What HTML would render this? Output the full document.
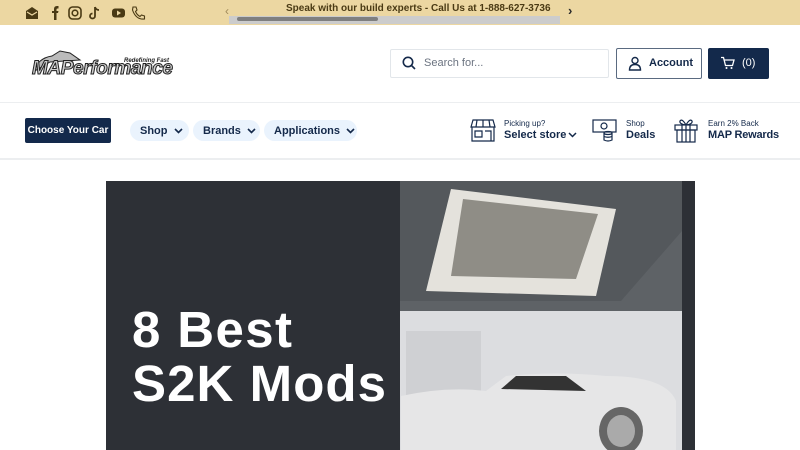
<!DOCTYPE html>
<html><head><meta charset="utf-8"><style>
*{margin:0;padding:0;box-sizing:border-box}
body{width:800px;height:450px;overflow:hidden;background:#fff;font-family:"Liberation Sans",Arial,sans-serif;position:relative;color:#14294a}
.abs{position:absolute;white-space:nowrap}
.top{left:0;top:0;width:800px;height:25px;background:#ecd7a2}
.pill{background:#eaf3fd;border-radius:11px;height:21px;top:120px;font-size:11px;font-weight:bold;color:#14294a;display:flex;align-items:center;padding-left:10px}
.pill svg{margin-left:6px}
</style></head><body>
<div class="abs top"></div>
<svg class="abs" style="left:24px;top:4px" width="125" height="18" viewBox="0 0 125 18" fill="#4a3a14">
<path d="M2 7 L8 3 L14 7 V15 H2Z"/><path d="M3 8 L8 11 L13 8" stroke="#ecd7a2" stroke-width="1.2" fill="none"/>
<path d="M30 16 V9 H28 V7 H30 V5 Q30 2 33 2 H34.5 V4.5 H33.5 Q32.5 4.5 32.5 5.5 V7 H34.5 L34 9 H32.5 V16Z"/>
<rect x="45" y="3" width="12" height="12" rx="3.5" fill="none" stroke="#4a3a14" stroke-width="1.6"/><circle cx="51" cy="9" r="2.8" fill="none" stroke="#4a3a14" stroke-width="1.6"/>
<path d="M71 3 V12 A2.5 2.5 0 1 1 68.5 9.5 M71 3 Q72 6 75 6" fill="none" stroke="#4a3a14" stroke-width="1.8"/>
<rect x="88" y="4.5" width="13" height="9" rx="3"/><path d="M93 6.5 L97 9 L93 11.5Z" fill="#ecd7a2"/>
<path d="M109 3 L112 3 L113 6 L111.5 7.5 Q113 11 116 12.5 L117.5 11 L120.5 12 L120.5 15 Q112 16 108.5 6 Z" fill="none" stroke="#4a3a14" stroke-width="1.1"/>
</svg>
<div class="abs" style="left:225px;top:4px;font-size:12px;color:#a08a5a">‹</div>
<div class="abs" style="left:229px;top:16px;width:331px;height:8px;background:#cccccc"></div>
<div class="abs" style="left:237px;top:17px;width:141px;height:4px;background:#7f7f7f;border-radius:2px"></div>
<div class="abs" style="left:286px;top:3px;font-size:10px;font-weight:bold;color:#4a3a14">Speak with our build experts - Call Us at 1-888-627-3736</div>
<div class="abs" style="left:568px;top:3px;font-size:13px;font-weight:bold;color:#2a2a2a">›</div>

<svg class="abs" style="left:30px;top:48px" width="146" height="30" viewBox="0 0 146 30">
<path d="M3 24 Q8 10 22 8 L30 3 L40 5 L50 12 L20 14 Z" fill="#bbb" stroke="#222" stroke-width="1"/>
<text x="2" y="26" font-family="Liberation Sans" font-weight="bold" font-style="italic" font-size="19" fill="#ccc" stroke="#222" stroke-width="1" letter-spacing="-1" textLength="140">MAPerformance</text>
<text x="94" y="14" font-family="Liberation Sans" font-weight="bold" font-style="italic" font-size="6" fill="#222">Redefining Fast</text>
</svg>

<div class="abs" style="left:390px;top:49px;width:219px;height:29px;border:1px solid #e2e6ea;border-radius:2px"></div>
<svg class="abs" style="left:402px;top:56px" width="14" height="14" viewBox="0 0 14 14"><circle cx="6" cy="6" r="4.7" fill="none" stroke="#14294a" stroke-width="1.6"/><path d="M9.5 9.5 L13 13" stroke="#14294a" stroke-width="1.6"/></svg>
<div class="abs" style="left:424px;top:57px;font-size:11px;color:#6b7380">Search for...</div>
<div class="abs" style="left:616px;top:48px;width:86px;height:31px;border:1px solid #5a6a80;border-radius:2px"></div>
<svg class="abs" style="left:628px;top:56px" width="14" height="15" viewBox="0 0 14 15"><circle cx="7" cy="4.5" r="3" fill="none" stroke="#14294a" stroke-width="1.4"/><path d="M1.5 14 Q1.5 8.5 7 8.5 Q12.5 8.5 12.5 14 Z" fill="none" stroke="#14294a" stroke-width="1.4"/></svg>
<div class="abs" style="left:649px;top:57px;font-size:11px;font-weight:bold">Account</div>
<div class="abs" style="left:708px;top:48px;width:61px;height:31px;background:#13294b;border-radius:2px"></div>
<svg class="abs" style="left:720px;top:56px" width="15" height="14" viewBox="0 0 15 14"><path d="M1 1.5 H3.5 L5.5 9.5 H12.5 L14 4 H4.5" fill="none" stroke="#fff" stroke-width="1.3"/><circle cx="6.5" cy="12" r="1" fill="#fff"/><circle cx="11.5" cy="12" r="1" fill="#fff"/></svg>
<div class="abs" style="left:742px;top:57px;font-size:11px;color:#fff">(0)</div>

<div class="abs" style="left:0;top:102px;width:800px;height:1px;background:#eceef0"></div>
<div class="abs" style="left:0;top:158px;width:800px;height:2px;background:#eceef0"></div>

<div class="abs" style="left:25px;top:118px;width:86px;height:25px;background:#13294b;border-radius:2px;color:#fff;font-size:10px;font-weight:bold;text-align:center;line-height:25px">Choose Your Car</div>
<div class="abs pill" style="left:130px;width:59px">Shop<svg width="9" height="6" viewBox="0 0 9 6"><path d="M1 1 L4.5 4.5 L8 1" fill="none" stroke="#14294a" stroke-width="1.6"/></svg></div>
<div class="abs pill" style="left:193px;width:67px">Brands<svg width="9" height="6" viewBox="0 0 9 6"><path d="M1 1 L4.5 4.5 L8 1" fill="none" stroke="#14294a" stroke-width="1.6"/></svg></div>
<div class="abs pill" style="left:264px;width:93px">Applications<svg width="9" height="6" viewBox="0 0 9 6"><path d="M1 1 L4.5 4.5 L8 1" fill="none" stroke="#14294a" stroke-width="1.6"/></svg></div>

<svg class="abs" style="left:470px;top:118px" width="26" height="24" viewBox="0 0 26 24" fill="none" stroke="#14294a" stroke-width="1.2"><path d="M3 2 H23 L25 9 H1Z M2 9 V23 H24 V9 M5 13 H12 V19 H5Z M15 13 H21 V23 H15"/><path d="M7 2 L6 9 M13 2 V9 M19 2 L20 9"/></svg>
<div class="abs" style="left:504px;top:119px;font-size:8px;color:#14294a">Picking up?</div>
<div class="abs" style="left:504px;top:129px;font-size:11px;font-weight:bold">Select store<svg style="margin-left:2px" width="9" height="6" viewBox="0 0 9 6"><path d="M1 1 L4.5 4.5 L8 1" fill="none" stroke="#14294a" stroke-width="1.5"/></svg></div>
<svg class="abs" style="left:592px;top:118px" width="26" height="25" viewBox="0 0 26 25" fill="none" stroke="#14294a" stroke-width="1.2"><rect x="1" y="2" width="23" height="12"/><circle cx="12" cy="8" r="3"/><ellipse cx="16" cy="15" rx="4" ry="1.5"/><path d="M12 15 V22 Q16 24 20 22 V15 M12 18.5 Q16 20 20 18.5"/></svg>
<div class="abs" style="left:626px;top:119px;font-size:8px">Shop</div>
<div class="abs" style="left:626px;top:129px;font-size:11px;font-weight:bold">Deals</div>
<svg class="abs" style="left:674px;top:118px" width="24" height="25" viewBox="0 0 24 25" fill="none" stroke="#14294a" stroke-width="1.2"><rect x="1" y="7" width="22" height="5"/><rect x="3" y="12" width="18" height="12"/><path d="M12 7 V24 M8 7 V24 M16 7 V24 M12 7 Q8 0 6 3 Q5 6 12 7 Q16 0 18 3 Q19 6 12 7"/></svg>
<div class="abs" style="left:708px;top:119px;font-size:8px">Earn 2% Back</div>
<div class="abs" style="left:708px;top:129px;font-size:11px;font-weight:bold;letter-spacing:-0.2px">MAP Rewards</div>

<svg class="abs" style="left:106px;top:181px" width="589" height="269" viewBox="0 0 589 269">
<rect width="589" height="269" fill="#2d3036"/>
<rect x="294" y="0" width="282" height="269" fill="#d0d2d6"/>
<rect x="294" y="0" width="282" height="130" fill="#5e6266"/>
<path d="M294 0 H576 V50 L515 120 H294Z" fill="#54585c"/>
<path d="M345 8 L510 28 L490 115 L320 110Z" fill="#e4e2dc"/>
<path d="M357 18 L492 33 L470 98 L345 95Z" fill="#8f8d86"/>
<rect x="294" y="130" width="282" height="139" fill="#dcdde0"/>
<rect x="300" y="150" width="75" height="70" fill="#cfd0d3"/>
<path d="M295 215 Q340 205 380 210 L400 195 Q450 190 500 195 Q560 195 570 220 V269 H295Z" fill="#e6e6e7"/>
<path d="M395 208 L410 195 H460 L480 210Z" fill="#333"/>
<ellipse cx="515" cy="250" rx="22" ry="24" fill="#666"/><ellipse cx="515" cy="250" rx="14" ry="16" fill="#aaa"/>
<rect x="576" y="0" width="13" height="269" fill="#2d3036"/>
<text x="26" y="166" font-family="Liberation Sans" font-weight="bold" font-size="51" fill="#fff" textLength="160">8 Best</text>
<text x="26" y="220" font-family="Liberation Sans" font-weight="bold" font-size="51" fill="#fff" textLength="254">S2K Mods</text>
</svg>
</body></html>
